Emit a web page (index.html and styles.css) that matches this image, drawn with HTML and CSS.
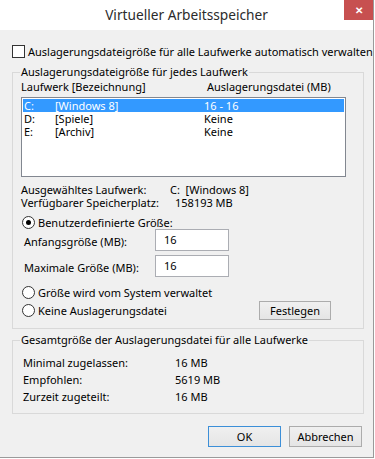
FILE: index.html
```html
<!DOCTYPE html>
<html lang="de">
<head>
  <meta charset="UTF-8" />
  <meta name="viewport" content="width=device-width, initial-scale=1" />
  <title>Virtueller Arbeitsspeicher</title>
  <link rel="stylesheet" href="styles.css">
</head>
<body>
  <div class="window">
    <!-- Title bar -->
    <div class="titlebar">
      <span class="title">Virtueller Arbeitsspeicher</span>
      <span class="close">&#x2715;</span>
    </div>

    <div class="content">
      <div class="check-row">
        <span class="checkbox"></span>
        <span>Auslagerungsdateigröße für alle Laufwerke automatisch verwalten</span>
      </div>

      <!-- Per-drive settings -->
      <fieldset class="group group-drives">
        <legend>Auslagerungsdateigröße für jedes Laufwerk</legend>
        <div class="list-head">
          <span>Laufwerk [Bezeichnung]</span>
          <span>Auslagerungsdatei (MB)</span>
        </div>
        <div class="listbox">
          <div class="list-row selected"><span>C:</span><span>[Windows 8]</span><span>16 - 16</span></div>
          <div class="list-row"><span>D:</span><span>[Spiele]</span><span>Keine</span></div>
          <div class="list-row"><span>E:</span><span>[Archiv]</span><span>Keine</span></div>
        </div>

        <div class="info">
          <span>Ausgewähltes Laufwerk:</span><span>C:&nbsp; [Windows 8]</span>
          <span>Verfügbarer Speicherplatz:</span><span class="info-free">158193 MB</span>
        </div>

        <div class="radio-row first">
          <span class="radio checked"></span>
          <span>Benutzerdefinierte Größe:</span>
        </div>
        <div class="size-row">
          <span class="size-label">Anfangsgröße (MB):</span>
          <span class="textbox">16</span>
        </div>
        <div class="size-row second">
          <span class="size-label">Maximale Größe (MB):</span>
          <span class="textbox">16</span>
        </div>
        <div class="radio-row system">
          <span class="radio"></span>
          <span>Größe wird vom System verwaltet</span>
        </div>
        <div class="radio-row last">
          <span class="radio"></span>
          <span>Keine Auslagerungsdatei</span>
          <button class="btn btn-set">Festlegen</button>
        </div>
      </fieldset>

      <!-- Totals for all drives -->
      <fieldset class="group group-total">
        <legend>Gesamtgröße der Auslagerungsdatei für alle Laufwerke</legend>
        <div class="totals">
          <span>Minimal zugelassen:</span><span>16 MB</span>
          <span>Empfohlen:</span><span>5619 MB</span>
          <span>Zurzeit zugeteilt:</span><span>16 MB</span>
        </div>
      </fieldset>

      <div class="actions">
        <button class="btn btn-default">OK</button>
        <button class="btn">Abbrechen</button>
      </div>
    </div>
  </div>
</body>
</html>
```

FILE: styles.css
```css
body {
  margin: 0;
  padding: 0;
  background: #fff;
  font-family: 'Noto Sans', sans-serif;
  font-size: 11px;
  color: #000;
}

.window {
  width: 373px;
  height: 457px;
  border-right: 1px solid #9a9a9a;
  border-bottom: 1px solid #9a9a9a;
  background: #f0f0f0;
  display: flex;
  flex-direction: column;
}

/* Title bar */
.titlebar {
  position: relative;
  height: 30px;
  flex-shrink: 0;
  background: #fff;
  display: flex;
  align-items: center;
  justify-content: center;
}

.title {
  font-size: 13.7px;
  color: #2b2b2b;
  margin-top: -1px;
}

.close {
  position: absolute;
  top: 0;
  right: 0;
  width: 29px;
  height: 20px;
  background: #c75050;
  color: #fff;
  font-size: 10px;
  font-weight: bold;
  display: flex;
  align-items: center;
  justify-content: center;
}

.content {
  padding: 0 11px 0 12px;
  display: flex;
  flex-direction: column;
}

.check-row {
  display: flex;
  align-items: center;
  gap: 3px;
  height: 13px;
  margin-top: 15px;
  line-height: 13px;
  white-space: nowrap;
}

.checkbox {
  width: 11px;
  height: 11px;
  flex-shrink: 0;
  border: 1px solid #333;
  background: #fff;
}

/* Group boxes */
.group {
  width: 352px;
  box-sizing: border-box;
  margin: 0;
  border: 1px solid #d9d9d9;
  padding: 0 8px 8px 8px;
}

.group legend {
  padding: 0 1px;
  line-height: 14px;
  margin-left: -1px;
}

.group-drives {
  margin-top: 7px;
}

.group-total {
  margin-top: 4px;
  padding-top: 7px;
}

.list-head {
  display: grid;
  grid-template-columns: 186px 1fr;
  line-height: 14px;
  padding-top: 1px;
}

.listbox {
  margin-top: 3px;
  width: 325px;
  height: 80px;
  box-sizing: border-box;
  border: 1px solid #828790;
  background: #fff;
  padding: 1px;
}

.list-row {
  display: grid;
  grid-template-columns: 31px 149px 1fr;
  height: 13px;
  line-height: 13px;
  padding-left: 1px;
}

.list-row.selected {
  background: #3399ff;
  color: #fff;
}

.info {
  display: grid;
  grid-template-columns: 149px 1fr;
  line-height: 13px;
  margin-top: 6px;
  white-space: nowrap;
}

.info-free {
  padding-left: 5px;
}

.radio-row {
  display: flex;
  align-items: center;
  gap: 3px;
  height: 14px;
  padding-left: 1px;
}

.radio-row.first {
  margin-top: 6px;
}

.radio-row.system {
  margin-top: 8px;
}

.radio-row.last {
  height: 19px;
  margin-top: 2px;
}

.radio {
  width: 11px;
  height: 11px;
  flex-shrink: 0;
  border: 1px solid #333;
  border-radius: 50%;
  background: #fff;
  display: flex;
  align-items: center;
  justify-content: center;
}

.radio.checked::after {
  content: "";
  width: 5px;
  height: 5px;
  border-radius: 50%;
  background: #000;
}

.size-row {
  display: flex;
  align-items: center;
  padding-left: 3px;
}

.size-row.second {
  margin-top: 4px;
}

.size-label {
  width: 131px;
  padding-top: 3px;
}

.textbox {
  width: 74px;
  height: 22px;
  box-sizing: border-box;
  border: 1px solid #abadb3;
  background: #fff;
  padding: 2px 0 0 8px;
}

/* Buttons */
.btn {
  font-family: inherit;
  font-size: 11px;
  color: #000;
  width: 73px;
  height: 21px;
  padding: 0;
  border: 1px solid #acacac;
  background: linear-gradient(#f0f0f0, #e5e5e5);
}

.btn-set {
  width: 72px;
  height: 19px;
  margin-left: auto;
  margin-right: 24px;
}

.btn-default {
  border-color: #3c8fd8;
}

.totals {
  display: grid;
  grid-template-columns: 152px 1fr;
  line-height: 17px;
  padding-left: 2px;
}

.actions {
  display: flex;
  justify-content: flex-end;
  gap: 8px;
  margin-top: 12px;
}
```
